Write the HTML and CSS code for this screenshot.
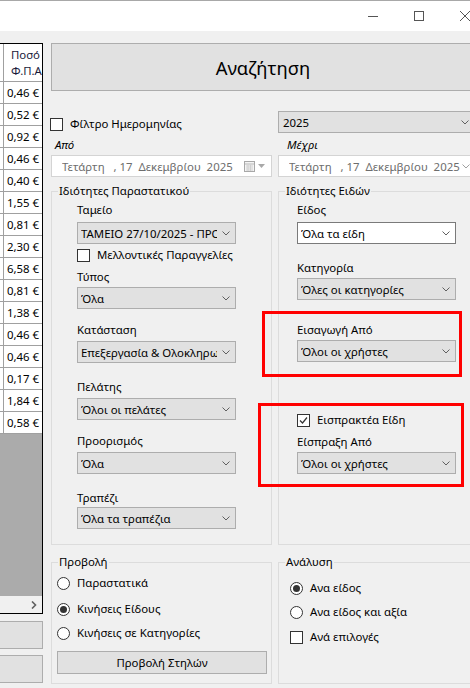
FILE: index.html
```html
<!DOCTYPE html>
<html lang="el">
<head>
<meta charset="utf-8">
<title>Αναζήτηση</title>
<link rel="stylesheet" href="styles.css">
</head>
<body>
<div class="titlebar">
  <div class="ctl"><svg width="10" height="10" viewBox="0 0 10 10"><path d="M0 5.5H10" stroke="#555" stroke-width="1"/></svg></div>
  <div class="ctl"><svg width="10" height="10" viewBox="0 0 10 10"><rect x="0.5" y="0.5" width="9" height="9" fill="none" stroke="#555" stroke-width="1"/></svg></div>
  <div class="ctl"><svg width="10" height="10" viewBox="0 0 10 10"><path d="M0 0L10 10M10 0L0 10" stroke="#555" stroke-width="1"/></svg></div>
</div>
<div class="main">
  <div class="left">
    <div class="grid">
      <div class="ghead"><div class="gcell">Ποσό<br>Φ.Π.Α</div></div>
      <div class="grow"><div class="gcell">0,46 €</div></div>
      <div class="grow"><div class="gcell">0,52 €</div></div>
      <div class="grow"><div class="gcell">0,92 €</div></div>
      <div class="grow"><div class="gcell">0,46 €</div></div>
      <div class="grow"><div class="gcell">0,40 €</div></div>
      <div class="grow"><div class="gcell">1,55 €</div></div>
      <div class="grow"><div class="gcell">0,81 €</div></div>
      <div class="grow"><div class="gcell">2,30 €</div></div>
      <div class="grow"><div class="gcell">6,58 €</div></div>
      <div class="grow"><div class="gcell">0,81 €</div></div>
      <div class="grow"><div class="gcell">1,38 €</div></div>
      <div class="grow"><div class="gcell">0,46 €</div></div>
      <div class="grow"><div class="gcell">0,46 €</div></div>
      <div class="grow"><div class="gcell">0,17 €</div></div>
      <div class="grow"><div class="gcell">1,84 €</div></div>
      <div class="grow"><div class="gcell">0,58 €</div></div>
      <div class="gempty"></div>
      <div class="hscroll"><svg width="6" height="8" viewBox="0 0 6 8"><path d="M1 0.5L4.5 4L1 7.5" fill="none" stroke="#606060" stroke-width="1.6"/></svg></div>
    </div>
    <button class="sidebtn"></button>
    <button class="sidebtn second"></button>
  </div>

  <div class="right">
    <button class="search">Αναζήτηση</button>
    <div class="form">
      <div class="chkrow top"><span class="chk"></span><span>Φίλτρο Ημερομηνίας</span></div>
      <div class="combo year"><span class="ctext">2025</span><svg class="chev" width="8" height="5" viewBox="0 0 8 5"><path d="M0.5 0.5L4 4L7.5 0.5" fill="none" stroke="#606060"/></svg></div>

      <div class="dlabel l1">Από</div>
      <div class="dlabel l2">Μέχρι</div>

      <div class="date d1"><span class="dtext">Τετάρτη   , 17  Δεκεμβρίου  2025</span>
        <svg class="cal" width="11" height="11" viewBox="0 0 11 11"><rect x="0.5" y="0.5" width="10" height="10" fill="#f4f4f4" stroke="#a8a8a8"/><path d="M1 3H10" stroke="#b8b8b8"/><path d="M2 5H9M2 7H9M2 9H9M4 3.5V10M6.5 3.5V10" stroke="#d0d0d0"/></svg>
        <svg class="tri" width="7" height="4" viewBox="0 0 7 4"><path d="M0 0H7L3.5 4Z" fill="#a8a8a8"/></svg>
      </div>
      <div class="date d2"><span class="dtext">Τετάρτη   , 17  Δεκεμβρίου  2025</span><svg class="chev" width="8" height="5" viewBox="0 0 8 5"><path d="M0.5 0.5L4 4L7.5 0.5" fill="none" stroke="#a0a0a0"/></svg></div>

      <fieldset class="gb upper">
        <legend>Ιδιότητες Παραστατικού</legend>
        <div class="gbody pleft">
          <div class="lbl mt3">Ταμείο</div>
          <div class="combo mt4"><span class="ctext">ΤΑΜΕΙΟ 27/10/2025 - ΠΡΟΣΩΡΙΝΟ</span><svg class="chev" width="8" height="5" viewBox="0 0 8 5"><path d="M0.5 0.5L4 4L7.5 0.5" fill="none" stroke="#606060"/></svg></div>
          <div class="chkrow mt4"><span class="chk"></span><span>Μελλοντικές Παραγγελίες</span></div>
          <div class="lbl mt7">Τύπος</div>
          <div class="combo mt2"><span class="ctext">Όλα</span><svg class="chev" width="8" height="5" viewBox="0 0 8 5"><path d="M0.5 0.5L4 4L7.5 0.5" fill="none" stroke="#606060"/></svg></div>
          <div class="lbl mt13">Κατάσταση</div>
          <div class="combo mt3"><span class="ctext">Επεξεργασία &amp; Ολοκληρωμένα</span><svg class="chev" width="8" height="5" viewBox="0 0 8 5"><path d="M0.5 0.5L4 4L7.5 0.5" fill="none" stroke="#606060"/></svg></div>
          <div class="lbl mt16">Πελάτης</div>
          <div class="combo mt3"><span class="ctext">Όλοι οι πελάτες</span><svg class="chev" width="8" height="5" viewBox="0 0 8 5"><path d="M0.5 0.5L4 4L7.5 0.5" fill="none" stroke="#606060"/></svg></div>
          <div class="lbl mt13">Προορισμός</div>
          <div class="combo mt3"><span class="ctext">Όλα</span><svg class="chev" width="8" height="5" viewBox="0 0 8 5"><path d="M0.5 0.5L4 4L7.5 0.5" fill="none" stroke="#606060"/></svg></div>
          <div class="lbl mt16">Τραπέζι</div>
          <div class="combo mt1"><span class="ctext">Όλα τα τραπέζια</span><svg class="chev" width="8" height="5" viewBox="0 0 8 5"><path d="M0.5 0.5L4 4L7.5 0.5" fill="none" stroke="#606060"/></svg></div>
        </div>
      </fieldset>

      <fieldset class="gb upper">
        <legend>Ιδιότητες Ειδών</legend>
        <div class="gbody pright">
          <div class="lbl mt3">Είδος</div>
          <div class="combo edit mt4"><span class="ctext">Όλα τα είδη</span><svg class="chev" width="8" height="5" viewBox="0 0 8 5"><path d="M0.5 0.5L4 4L7.5 0.5" fill="none" stroke="#606060"/></svg></div>
          <div class="lbl mt16">Κατηγορία</div>
          <div class="combo mt2"><span class="ctext">Όλες οι κατηγορίες</span><svg class="chev" width="8" height="5" viewBox="0 0 8 5"><path d="M0.5 0.5L4 4L7.5 0.5" fill="none" stroke="#606060"/></svg></div>
          <div class="lbl mt22">Εισαγωγή Από</div>
          <div class="combo mt2"><span class="ctext">Όλοι οι χρήστες</span><svg class="chev" width="8" height="5" viewBox="0 0 8 5"><path d="M0.5 0.5L4 4L7.5 0.5" fill="none" stroke="#606060"/></svg></div>
          <div class="chkrow mt51"><span class="chk"><svg width="11" height="11" viewBox="0 0 11 11"><path d="M2 5.5L4.5 8L9 2.5" fill="none" stroke="#333" stroke-width="1.2"/></svg></span><span>Εισπρακτέα Είδη</span></div>
          <div class="lbl mt7">Είσπραξη Από</div>
          <div class="combo mt2"><span class="ctext">Όλοι οι χρήστες</span><svg class="chev" width="8" height="5" viewBox="0 0 8 5"><path d="M0.5 0.5L4 4L7.5 0.5" fill="none" stroke="#606060"/></svg></div>
        </div>
      </fieldset>

      <fieldset class="gb lower">
        <legend>Προβολή</legend>
        <div class="gbody pview">
          <div class="radrow mt6"><span class="radio"></span><span>Παραστατικά</span></div>
          <div class="radrow mt12"><span class="radio on"></span><span>Κινήσεις Είδους</span></div>
          <div class="radrow mt10"><span class="radio"></span><span>Κινήσεις σε Κατηγορίες</span></div>
          <button class="colsbtn">Προβολή Στηλών</button>
        </div>
      </fieldset>

      <fieldset class="gb lower">
        <legend>Ανάλυση</legend>
        <div class="gbody pan">
          <div class="radrow mt11"><span class="radio on"></span><span>Ανα είδος</span></div>
          <div class="radrow mt10"><span class="radio"></span><span>Ανα είδος και αξία</span></div>
          <div class="radrow mt11"><span class="chk"></span><span>Ανά επιλογές</span></div>
        </div>
      </fieldset>
    </div>
    <div class="mark mark1"></div>
    <div class="mark mark2"></div>
  </div>
</div>
</body>
</html>
```

FILE: styles.css
```css
* { box-sizing: border-box; }
body {
  margin: 0;
  width: 470px;
  height: 688px;
  overflow: hidden;
  background: #f0f0f0;
  font-family: "Noto Sans", "DejaVu Sans", sans-serif;
  font-size: 11.4px;
  color: #000;
}
button { font-family: inherit; color: #000; padding: 0; }

.titlebar {
  height: 31px;
  background: #fff;
  border-top: 1px solid #a8a8a8;
  display: flex;
  justify-content: flex-end;
  margin-right: -18px;
}
.ctl { width: 46px; height: 30px; display: flex; align-items: center; justify-content: center; }

.main { display: flex; height: 657px; }

.left { width: 51px; flex: none; padding-top: 12px; }
.grid {
  width: 43px;
  height: 571px;
  border: 1px solid #000;
  border-left: none;
  background: #fff;
  display: flex;
  flex-direction: column;
  overflow: hidden;
}
.ghead { height: 38px; flex: none; border-bottom: 1px solid #a0a0a0; padding-left: 3px; }
.ghead .gcell {
  height: 100%;
  border-left: 1px solid #a0a0a0;
  padding-left: 7px;
  line-height: 16px;
  display: flex;
  flex-direction: column;
  justify-content: center;
  white-space: nowrap;
  color: #1a1a3a;
}
.grow { height: 22px; flex: none; border-bottom: 1px solid #a0a0a0; padding-left: 3px; }
.grow .gcell {
  height: 100%;
  border-left: 1px solid #a0a0a0;
  padding-left: 3px;
  display: flex;
  align-items: center;
  white-space: nowrap;
}
.gempty { flex: 1; background: #ababab; }
.hscroll {
  height: 17px;
  flex: none;
  background: #f0f0f0;
  display: flex;
  align-items: center;
  justify-content: flex-end;
  padding-right: 5px;
}
.sidebtn {
  display: block;
  width: 44px;
  height: 28px;
  margin: 7px 0 0 -1px;
  background: #e1e1e1;
  border: 1px solid #adadad;
}
.sidebtn.second { margin-top: 6px; }

.right { width: 424px; flex: none; padding-top: 12px; position: relative; }
.search {
  display: block;
  width: 424px;
  height: 48px;
  background: #e1e1e1;
  border: 1px solid #adadad;
  font-size: 18.4px;
}
.form {
  display: grid;
  grid-template-columns: 221px 197px;
  column-gap: 6px;
  margin-top: 20px;
  align-items: start;
}

.chkrow, .radrow { display: flex; align-items: center; height: 14px; line-height: 14px; white-space: nowrap; }
.chkrow { gap: 7px; }
.radrow { gap: 7px; }
.chkrow.top { margin-top: 6px; margin-left: -1px; }
.chk {
  width: 13px; height: 13px; flex: none;
  border: 1px solid #333;
  background: #fff;
  display: flex; align-items: center; justify-content: center;
}
.radio {
  width: 13px; height: 13px; flex: none;
  border: 1px solid #333;
  border-radius: 50%;
  background: #fff;
  display: flex; align-items: center; justify-content: center;
}
.radio.on::after {
  content: "";
  width: 7px; height: 7px;
  border-radius: 50%;
  background: #333;
}

.combo {
  display: flex;
  align-items: center;
  width: 159px;
  height: 22px;
  background: #e1e1e1;
  border: 1px solid #adadad;
  padding: 0 5px 0 3px;
  white-space: nowrap;
}
.combo.edit { background: #fff; border-color: #7a7a7a; }
.combo.year { width: 197px; padding-left: 4px; }
.ctext { flex: 1; overflow: hidden; margin-right: 5px; }
.chev { flex: none; }

.dlabel { margin-top: 4px; height: 16px; line-height: 16px; font-style: italic; }
.dlabel.l1 { padding-left: 4px; }
.dlabel.l2 { padding-left: 9px; }

.date {
  margin-top: 2px;
  display: flex;
  align-items: center;
  height: 22px;
  background: #fff;
  border: 1px solid #d4d4d4;
  padding: 0 6px 0 10px;
  color: #6d6d6d;
  white-space: pre;
}
.date .dtext { flex: 1; overflow: hidden; }
.date .cal { margin-left: 8px; flex: none; }
.date .tri { margin-left: 3px; flex: none; }
.date.d2 { padding-right: 4px; }
.date.d2 .dtext { margin-right: 1px; }

.gb {
  margin: 0;
  padding: 0;
  min-width: 0;
  border: 1px solid #dcdcdc;
}
.gb legend { padding: 0 1px; margin-left: 6px; height: 16px; line-height: 16px; }
.gb .lbl { height: 16px; line-height: 16px; }
.upper { margin-top: 6px; height: 362px; }
.lower { margin-top: 9px; height: 130px; }
.pleft { padding-left: 25px; }
.pright { padding-left: 18px; }
.pview { padding-left: 5px; }
.pan { padding-left: 11px; }

.colsbtn {
  display: block;
  margin-top: 11px;
  width: 210px;
  height: 23px;
  background: #e1e1e1;
  border: 1px solid #adadad;
  font-size: 11.4px;
}

.mt1 { margin-top: 1px; }
.mt2 { margin-top: 2px; }
.mt3 { margin-top: 3px; }
.mt4 { margin-top: 4px; }
.mt6 { margin-top: 6px; }
.mt7 { margin-top: 7px; }
.mt10 { margin-top: 10px; }
.mt11 { margin-top: 11px; }
.mt12 { margin-top: 12px; }
.mt13 { margin-top: 13px; }
.mt16 { margin-top: 16px; }
.mt22 { margin-top: 22px; }
.mt51 { margin-top: 51px; }

.mark { position: absolute; border: 3px solid #f00; }
.mark1 { left: 211px; top: 280px; width: 200px; height: 66px; }
.mark2 { left: 207px; top: 372px; width: 206px; height: 84px; }
```
